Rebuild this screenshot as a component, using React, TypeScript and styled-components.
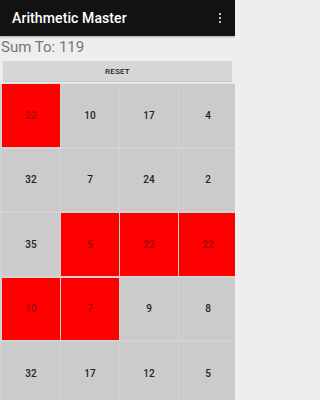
import React from "react";
import styled, { createGlobalStyle } from "styled-components";

const Global = createGlobalStyle`
  html, body { margin: 0; padding: 0; background: #eeeeee; overflow: hidden; }
  body { font-family: Roboto, "Noto Sans", Arial, sans-serif; }
`;

const Page = styled.div`
  width: 235px;
  height: 400px;
  display: flex;
  flex-direction: column;
  background: #eeeeee;
  overflow: hidden;
`;

const Toolbar = styled.div`
  height: 36px;
  flex: none;
  background: #121212;
  display: flex;
  align-items: center;
  justify-content: space-between;
  padding: 0 12px 0 12px;
  box-sizing: border-box;
  box-shadow: 0 1px 2px rgba(0, 0, 0, 0.3);
`;

const Title = styled.div`
  color: #ffffff;
  font-size: 14px;
  font-weight: 500;
  letter-spacing: 0.1px;
`;

const Dots = styled.div`
  display: flex;
  flex-direction: column;
  gap: 1.5px;
  margin-right: 2px;
`;

const Dot = styled.span`
  width: 2.5px;
  height: 2.5px;
  background: #ffffff;
  border-radius: 50%;
`;

const SumText = styled.div`
  color: #757575;
  font-size: 15px;
  line-height: 18px;
  padding: 2px 0 0 1px;
  height: 20px;
`;

const ResetButton = styled.div`
  margin: 3px 3px 0 3px;
  height: 20px;
  background: #d6d6d6;
  border-radius: 1px;
  box-shadow: 0 1px 1px rgba(0, 0, 0, 0.18);
  display: flex;
  align-items: center;
  justify-content: center;
  font-size: 8px;
  font-weight: 500;
  color: #222222;
  letter-spacing: 0.2px;
`;

const Grid = styled.div`
  margin-top: 2px;
  padding: 0 0 0 2px;
  display: grid;
  grid-template-columns: repeat(4, 58px);
  grid-auto-rows: 62.5px;
  column-gap: 1px;
  row-gap: 2px;
  background: #d2d2d2;
  flex: 1;
  padding-top: 0;
`;

const Cell = styled.div<{ $on: boolean }>`
  background: ${(p) => (p.$on ? "#ff0000" : "#cbcbcb")};
  color: ${(p) => (p.$on ? "#9a0c0c" : "#222222")};
  display: flex;
  align-items: center;
  justify-content: center;
  font-size: 10px;
  font-weight: 500;
`;

const GridWrap = styled.div`
  background: #d2d2d2;
  padding-top: 0;
  margin-top: 2px;
  flex: 1;
  overflow: hidden;
  border-top: 1px solid #e0e0e0;
`;

const cells: [number, boolean][] = [
  [22, true], [10, false], [17, false], [4, false],
  [32, false], [7, false], [24, false], [2, false],
  [35, false], [5, true], [22, true], [22, true],
  [10, true], [7, true], [9, false], [8, false],
  [32, false], [17, false], [12, false], [5, false],
];

export default function App() {
  return (
    <Page>
      <Global />
      <Toolbar>
        <Title>Arithmetic Master</Title>
        <Dots>
          <Dot />
          <Dot />
          <Dot />
        </Dots>
      </Toolbar>
      <SumText>Sum To: 119</SumText>
      <ResetButton>RESET</ResetButton>
      <GridWrap>
        <Grid style={{ marginTop: 0 }}>
          {cells.map(([n, on], i) => (
            <Cell key={i} $on={on}>
              {n}
            </Cell>
          ))}
        </Grid>
      </GridWrap>
    </Page>
  );
}
